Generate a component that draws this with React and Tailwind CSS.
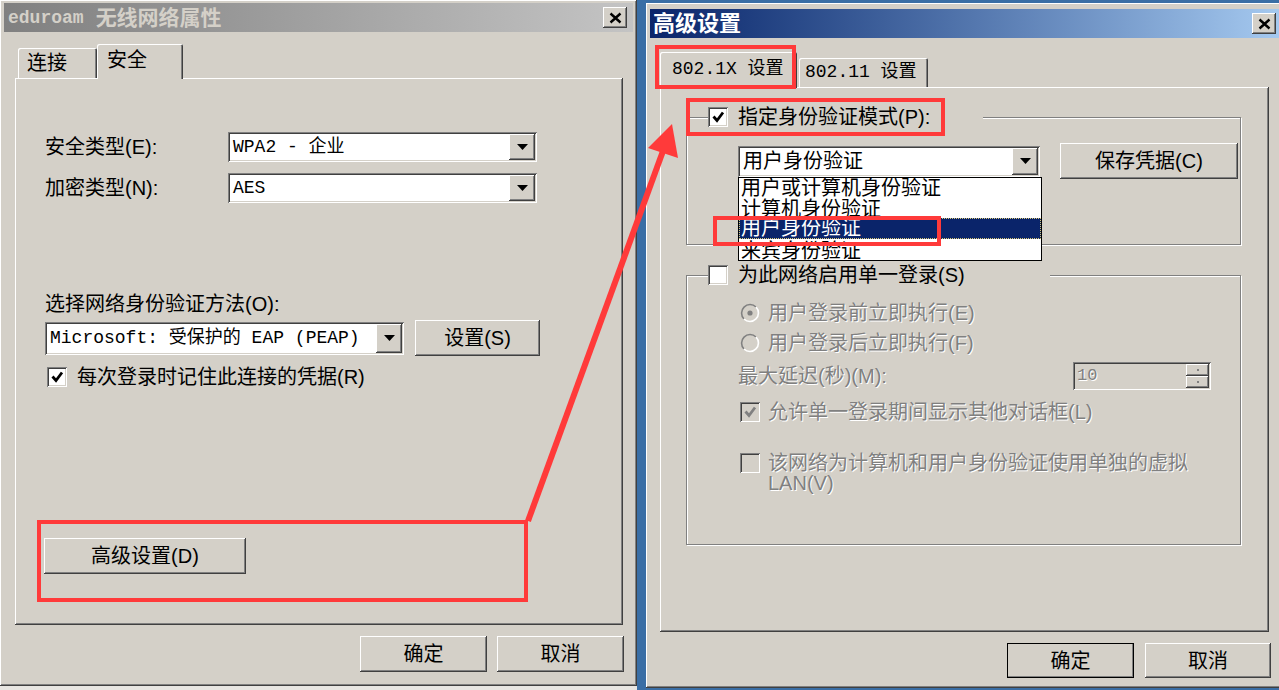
import React from "react";

const raised =
  "shadow-[inset_-1px_-1px_0_#404040,inset_1px_1px_0_#ffffff,inset_-2px_-2px_0_#808080,inset_2px_2px_0_#d4d0c8]";
const sunken =
  "shadow-[inset_1px_1px_0_#808080,inset_-1px_-1px_0_#ffffff,inset_2px_2px_0_#404040,inset_-2px_-2px_0_#d4d0c8]";
const tabEdge =
  "shadow-[inset_1px_1px_0_#ffffff,inset_-1px_0_0_#404040,inset_-2px_0_0_#808080]";
const etched = "border border-[#808080] shadow-[inset_1px_1px_0_#ffffff,1px_1px_0_#ffffff]";
const mono = "font-['Liberation_Mono','Noto_Sans_CJK_SC',monospace]";
const dim = "text-[#808080] [text-shadow:1px_1px_0_#ffffff]";

function DownArrow({ color = "#000" }) {
  return (
    <svg width="11" height="6" viewBox="0 0 11 6">
      <path d="M0 0h11L5.5 6z" fill={color} />
    </svg>
  );
}

function Close() {
  return (
    <div className={`w-[24px] h-[21px] bg-[#d4d0c8] ${raised} flex items-center justify-center`}>
      <svg width="13" height="12" viewBox="0 0 13 12">
        <path d="M1.5 1.5l10 9M11.5 1.5l-10 9" stroke="#000" strokeWidth="2.4" />
      </svg>
    </div>
  );
}

function Combo({ className, children }) {
  return (
    <div className={`flex bg-white p-[2px] ${sunken} ${className}`}>
      <div className="flex-1 flex items-center pl-[3px] overflow-hidden whitespace-nowrap">{children}</div>
      <div className={`w-[26px] bg-[#d4d0c8] ${raised} flex items-center justify-center`}>
        <DownArrow />
      </div>
    </div>
  );
}

function Btn({ className, children }) {
  return (
    <div className={`bg-[#d4d0c8] ${raised} flex items-center justify-center ${className}`}>{children}</div>
  );
}

function Check({ checked, disabled }) {
  return (
    <div
      className={`w-[20px] h-[20px] shrink-0 ${sunken} ${disabled ? "bg-[#d4d0c8]" : "bg-white"} flex items-center justify-center`}
    >
      {checked && (
        <svg width="14" height="14" viewBox="0 0 14 14">
          <path d="M2.5 6.5l3.5 4L12 2.5" fill="none" stroke={disabled ? "#808080" : "#000"} strokeWidth="2.8" />
        </svg>
      )}
    </div>
  );
}

function Radio({ on }) {
  return (
    <svg width="20" height="20" viewBox="0 0 20 20" className="shrink-0">
      <circle cx="10" cy="10" r="8.5" fill="#d4d0c8" />
      <path d="M3.99 16.01A8.5 8.5 0 0 1 16.01 3.99" fill="none" stroke="#808080" strokeWidth="1.6" />
      <path d="M16.01 3.99A8.5 8.5 0 0 1 3.99 16.01" fill="none" stroke="#ffffff" strokeWidth="1.6" />
      {on && <circle cx="10" cy="10" r="2.6" fill="#808080" />}
    </svg>
  );
}

function LeftWindow() {
  return (
    <div className={`w-[637px] h-[686px] shrink-0 bg-[#d4d0c8] ${raised} pt-[3px] px-[4px]`}>
      <div className="h-[29px] bg-linear-to-r from-[#808080] to-[#c4c4c4] flex items-center justify-between pl-[4px] pr-[6px]">
        <div className="flex items-center font-bold text-[#d4d0c8]">
          <span className={`${mono} text-[18px]`}>eduroam</span>
          <span className="ml-[12px] text-[21px] leading-none">无线网络属性</span>
        </div>
        <Close />
      </div>

      <div className="ml-[14px] mt-[12px] h-[34px] flex items-end">
        <div className={`w-[79px] h-[30px] ${tabEdge} rounded-t-[2px] pl-[9px] pt-[3px] leading-[24px]`}>连接</div>
        <div
          className={`relative z-10 w-[86px] h-[35px] mb-[-1px] bg-[#d4d0c8] ${tabEdge} rounded-t-[2px] pl-[10px] pt-[4px] leading-[24px]`}
        >
          安全
        </div>
      </div>

      <div className={`ml-[11px] w-[608px] h-[547px] ${raised} pl-[30px] pt-[54px]`}>
        <div className="flex items-center h-[30px]">
          <span className="w-[183px]">安全类型(E):</span>
          <Combo className="w-[309px] h-[30px]">
            <span className={`${mono} text-[18px]`}>WPA2 - 企业</span>
          </Combo>
        </div>
        <div className="flex items-center h-[30px] mt-[11px]">
          <span className="w-[183px]">加密类型(N):</span>
          <Combo className="w-[309px] h-[30px]">
            <span className={`${mono} text-[18px]`}>AES</span>
          </Combo>
        </div>
        <div className="mt-[90px] h-[22px] leading-[22px]">选择网络身份验证方法(O):</div>
        <div className="mt-[5px] flex items-center gap-[11px] h-[36px]">
          <Combo className="w-[359px] h-[33px]">
            <span className={`${mono} text-[18px]`}>Microsoft: 受保护的 EAP (PEAP)</span>
          </Combo>
          <Btn className="w-[125px] h-[36px]">设置(S)</Btn>
        </div>
        <div className="mt-[11px] flex items-center h-[20px] pl-[2px]">
          <Check checked />
          <span className="ml-[10px]">每次登录时记住此连接的凭据(R)</span>
        </div>
        <Btn className="mt-[151px] ml-[-1px] w-[202px] h-[36px]">高级设置(D)</Btn>
      </div>

      <div className="ml-[356px] mt-[11px] flex gap-[10px]">
        <Btn className="w-[127px] h-[36px]">确定</Btn>
        <Btn className="w-[127px] h-[36px]">取消</Btn>
      </div>
    </div>
  );
}

function RightWindow() {
  return (
    <div className="flex-1 bg-[#3a6ea5] pl-[9px] pt-[3px]">
      <div className={`w-[640px] h-[685px] bg-[#d4d0c8] ${raised} pt-[6px] pl-[4px]`}>
        <div className="w-[632px] h-[29px] bg-linear-to-r from-[#0a246a] to-[#a6caf0] flex items-center justify-between pl-[3px] pr-[6px]">
          <span className="font-bold text-white text-[22px] leading-none">高级设置</span>
          <Close />
        </div>

        <div className="ml-[10px] mt-[14px] h-[35px] flex items-end">
          <div
            className={`relative z-10 w-[137px] h-[36px] mb-[-1px] bg-[#d4d0c8] ${tabEdge} rounded-t-[2px] pl-[12px] pt-[5px] leading-[24px] ${mono} text-[18px]`}
          >
            802.1X 设置
          </div>
          <div
            className={`ml-[2px] w-[129px] h-[29px] ${tabEdge} rounded-t-[2px] pl-[6px] pt-[2px] leading-[24px] ${mono} text-[18px]`}
          >
            802.11 设置
          </div>
        </div>

        <div className={`ml-[10px] w-[609px] h-[545px] ${raised} pl-[26px] pt-[30px]`}>
          <div className={`relative w-[555px] h-[128px] ${etched}`}>
            <div className="absolute left-[21px] top-[-12px] h-[22px] w-[275px] bg-[#d4d0c8] flex items-center">
              <Check checked />
              <span className="ml-[10px]">指定身份验证模式(P):</span>
            </div>
            <div className="pt-[25px] pl-[51px] flex items-center">
              <Combo className="w-[302px] h-[31px]">
                <span>用户身份验证</span>
              </Combo>
              <Btn className="ml-[20px] w-[178px] h-[36px]">保存凭据(C)</Btn>
            </div>
            <div className="absolute z-20 left-[51px] top-[59px] w-[304px] h-[84px] bg-white border border-black overflow-hidden">
              <div className="h-[20px] leading-[20px] pl-[2px] whitespace-nowrap">用户或计算机身份验证</div>
              <div className="h-[20px] leading-[22px] pl-[2px] whitespace-nowrap">计算机身份验证</div>
              <div className="h-[21px] leading-[19px] pl-[1px] whitespace-nowrap bg-[#0a246a] text-white border border-dotted border-[#d8c878]">
                用户身份验证
              </div>
              <div className="h-[21px] leading-[24px] pl-[2px] whitespace-nowrap">来宾身份验证</div>
            </div>
          </div>

          <div className={`relative mt-[30px] w-[555px] h-[270px] ${etched}`}>
            <div className="absolute left-[21px] top-[-12px] h-[22px] w-[342px] bg-[#d4d0c8] flex items-center">
              <Check />
              <span className="ml-[10px]">为此网络启用单一登录(S)</span>
            </div>
            <div className={`pl-[53px] pt-[26px] ${dim}`}>
              <div className="h-[22px] flex items-center">
                <Radio on />
                <span className="ml-[8px]">用户登录前立即执行(E)</span>
              </div>
              <div className="mt-[8px] h-[22px] flex items-center">
                <Radio />
                <span className="ml-[8px]">用户登录后立即执行(F)</span>
              </div>
              <div className="mt-[8px] h-[28px] flex items-center">
                <span className="ml-[-2px] w-[335px]">最大延迟(秒)(M):</span>
                <div className={`w-[138px] h-[28px] flex bg-[#d4d0c8] p-[2px] ${sunken}`}>
                  <span className={`flex-1 pl-[2px] leading-[24px] ${mono} text-[17px]`}>10</span>
                  <div className="w-[23px] flex flex-col">
                    <div className={`flex-1 ${raised} flex items-center justify-center`}>
                      <span className="w-[2px] h-[2px] bg-[#808080]" />
                    </div>
                    <div className={`flex-1 ${raised} flex items-center justify-center`}>
                      <span className="w-[2px] h-[2px] bg-[#808080]" />
                    </div>
                  </div>
                </div>
              </div>
              <div className="mt-[11px] h-[22px] flex items-center">
                <Check checked disabled />
                <span className="ml-[8px]">允许单一登录期间显示其他对话框(L)</span>
              </div>
              <div className="mt-[30px] flex items-start">
                <Check disabled />
                <div className="ml-[8px] leading-[20px]">
                  <div>该网络为计算机和用户身份验证使用单独的虚拟</div>
                  <div>LAN(V)</div>
                </div>
              </div>
            </div>
          </div>
        </div>

        <div className="ml-[357px] mt-[11px] flex gap-[11px]">
          <Btn className="w-[127px] h-[35px] outline outline-1 outline-black -outline-offset-1">确定</Btn>
          <Btn className="w-[126px] h-[35px]">取消</Btn>
        </div>
      </div>
    </div>
  );
}

function Marks() {
  return (
    <svg className="absolute inset-0 z-50 pointer-events-none" width="1279" height="690">
      <g fill="none" stroke="#ff3a3a" strokeWidth="4">
        <rect x="39" y="522" width="487" height="78" />
        <rect x="657" y="47" width="137" height="40" />
        <rect x="688" y="100" width="255" height="34" />
        <rect x="715" y="218" width="224" height="26" />
      </g>
      <line x1="528" y1="521" x2="663" y2="151" stroke="#ff3a3a" strokeWidth="6" />
      <polygon points="672,124 648,148 678,158" fill="#ff3a3a" />
    </svg>
  );
}

export default function App() {
  return (
    <div className="relative w-[1279px] h-[690px] overflow-hidden flex bg-[#e8e6e2] text-black text-[20px] leading-none font-['Liberation_Sans','Noto_Sans_CJK_SC',sans-serif]">
      <LeftWindow />
      <RightWindow />
      <Marks />
    </div>
  );
}
